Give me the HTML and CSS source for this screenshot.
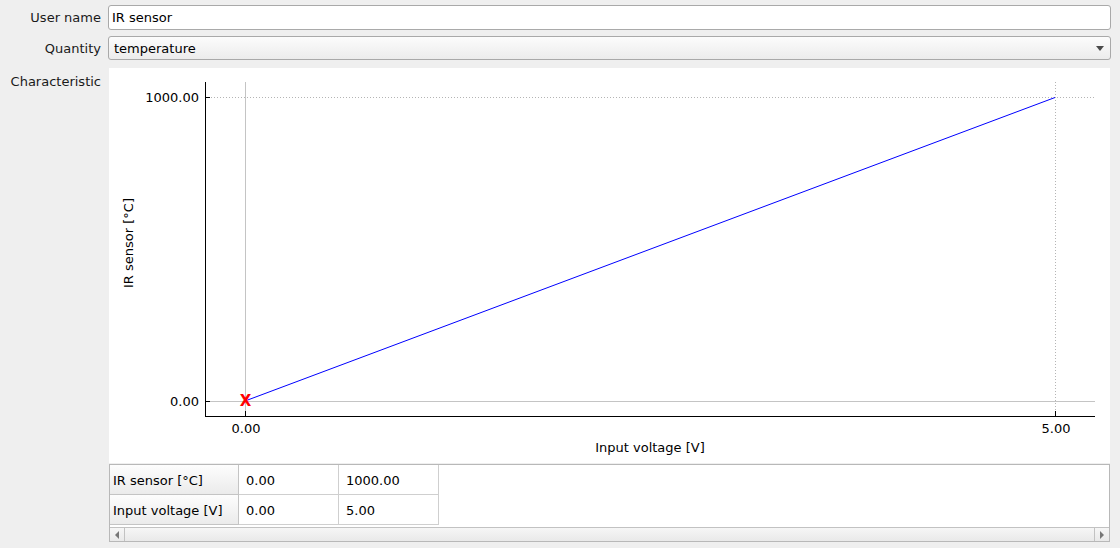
FILE: index.html
```html
<!DOCTYPE html>
<html>
<head>
<meta charset="utf-8">
<link rel="stylesheet" href="styles.css">
</head>
<body>
<div class="form">
  <div class="label row1">User name</div>
  <div class="field"><div class="lineedit">IR sensor</div></div>

  <div class="label row2">Quantity</div>
  <div class="field"><div class="combo"><span>temperature</span><span class="arrow"></span></div></div>

  <div class="label row3">Characteristic</div>
  <div class="field charfield">
    <div class="chart">
      <svg width="1001" height="395" viewBox="0 0 1001 395" xmlns="http://www.w3.org/2000/svg">
        <!-- grid -->
        <line x1="136.5" y1="14" x2="136.5" y2="348" stroke="#c4c4c4" stroke-width="1"/>
        <line x1="96" y1="333.5" x2="986" y2="333.5" stroke="#c4c4c4" stroke-width="1"/>
        <line x1="96" y1="29.5" x2="986" y2="29.5" stroke="#b4b4b4" stroke-width="1" stroke-dasharray="1 2"/>
        <line x1="946.5" y1="14" x2="946.5" y2="348" stroke="#b4b4b4" stroke-width="1" stroke-dasharray="1 2"/>
        <!-- axes -->
        <line x1="96.5" y1="14" x2="96.5" y2="348.5" stroke="#000" stroke-width="1"/>
        <line x1="96" y1="348.5" x2="986" y2="348.5" stroke="#000" stroke-width="1"/>
        <!-- ticks -->
        <line x1="96" y1="29.5" x2="101" y2="29.5" stroke="#000"/>
        <line x1="96" y1="333.5" x2="101" y2="333.5" stroke="#000"/>
        <line x1="136.5" y1="343" x2="136.5" y2="348" stroke="#000"/>
        <line x1="946.5" y1="343" x2="946.5" y2="348" stroke="#000"/>
        <!-- tick labels -->
        <text x="90" y="34" class="tick" text-anchor="end">1000.00</text>
        <text x="90" y="338" class="tick" text-anchor="end">0.00</text>
        <text x="137" y="365" class="tick" text-anchor="middle">0.00</text>
        <text x="947" y="365" class="tick" text-anchor="middle">5.00</text>
        <!-- axis titles -->
        <text x="541" y="384" class="tick" text-anchor="middle">Input voltage [V]</text>
        <text transform="translate(24 175) rotate(-90)" class="tick" text-anchor="middle">IR sensor [°C]</text>
        <!-- curve -->
        <line x1="136" y1="333" x2="946" y2="29.5" stroke="#0000ff" stroke-width="1"/>
        <!-- point marker -->
        <text x="136.5" y="337.5" class="marker" text-anchor="middle">X</text>
      </svg>
    </div>
    <div class="tablebox">
      <div class="grid">
        <div class="hcell">IR sensor [°C]</div>
        <div class="cell">0.00</div>
        <div class="cell">1000.00</div>
        <div class="hcell">Input voltage [V]</div>
        <div class="cell">0.00</div>
        <div class="cell">5.00</div>
      </div>
      <div class="hscroll">
        <div class="sbtn left"><span class="tri-left"></span></div>
        <div class="strack"></div>
        <div class="sbtn right"><span class="tri-right"></span></div>
      </div>
    </div>
  </div>
</div>
</body>
</html>
```

FILE: styles.css
```css
html, body {
  margin: 0;
  padding: 0;
  background: #efefef;
  font-family: "DejaVu Sans", sans-serif;
  font-size: 13px;
  color: #000;
}

.form {
  display: grid;
  grid-template-columns: 101px 1fr;
  grid-template-rows: 25px 24px auto;
  column-gap: 7px;
  row-gap: 6px;
  padding: 5px 9px 0 0;
  height: 548px;
  box-sizing: border-box;
}

.label {
  text-align: right;
  color: #1a1a1a;
}
.row1, .row2 {
  display: flex;
  align-items: center;
  justify-content: flex-end;
}
.row3 {
  padding-top: 6px;
  margin-top: 2px;
}

.lineedit {
  height: 25px;
  box-sizing: border-box;
  border: 1px solid #a9a9a9;
  border-radius: 3px;
  background: #fff;
  padding: 0 4px 0 3px;
  display: flex;
  align-items: center;
}

.combo {
  height: 24px;
  box-sizing: border-box;
  border: 1px solid #a9a9a9;
  border-radius: 3px;
  background: linear-gradient(#fcfcfc, #ececec);
  padding: 0 6px 0 5px;
  display: flex;
  align-items: center;
  justify-content: space-between;
}
.arrow {
  width: 0;
  height: 0;
  border-left: 4px solid transparent;
  border-right: 4px solid transparent;
  border-top: 5px solid #4a4a4a;
  margin-top: 1px;
}

.charfield {
  margin-top: 2px;
  padding: 0 1px;
  display: flex;
  flex-direction: column;
}

.chart {
  background: #fff;
  height: 395px;
}
.chart svg {
  display: block;
}
.tick {
  font-family: "DejaVu Sans", sans-serif;
  font-size: 13px;
  fill: #000;
}
.marker {
  font-family: "DejaVu Sans", sans-serif;
  font-size: 15px;
  font-weight: bold;
  fill: #ff0000;
}

.tablebox {
  margin-top: 1px;
  height: 78px;
  box-sizing: border-box;
  border: 1px solid #b8b8b8;
  background: #fff;
  display: flex;
  flex-direction: column;
  justify-content: space-between;
}

.grid {
  display: grid;
  grid-template-columns: 129px 100px 100px;
  grid-auto-rows: 30px;
  width: 329px;
}
.hcell, .cell {
  box-sizing: border-box;
  border-right: 1px solid #cfcfcf;
  border-bottom: 1px solid #cfcfcf;
  display: flex;
  align-items: center;
  white-space: nowrap;
}
.hcell {
  background: linear-gradient(#fdfdfd, #ebebeb);
  padding-left: 3px;
  padding-top: 1px;
  border-right-color: #c4c4c4;
  border-bottom-color: #c4c4c4;
}
.cell {
  padding-left: 7px;
  padding-top: 1px;
}

.hscroll {
  height: 14px;
  box-sizing: border-box;
  border-top: 1px solid #c2c2c2;
  background: linear-gradient(#f6f6f6, #e9e9e9);
  display: flex;
}
.sbtn {
  width: 14px;
  display: flex;
  align-items: center;
  justify-content: center;
}
.sbtn.left {
  border-right: 1px solid #c2c2c2;
}
.sbtn.right {
  border-left: 1px solid #c2c2c2;
}
.strack {
  flex: 1;
}
.tri-left {
  width: 0;
  height: 0;
  border-top: 4px solid transparent;
  border-bottom: 4px solid transparent;
  border-right: 4px solid #777;
}
.tri-right {
  width: 0;
  height: 0;
  border-top: 4px solid transparent;
  border-bottom: 4px solid transparent;
  border-left: 4px solid #777;
}
```
